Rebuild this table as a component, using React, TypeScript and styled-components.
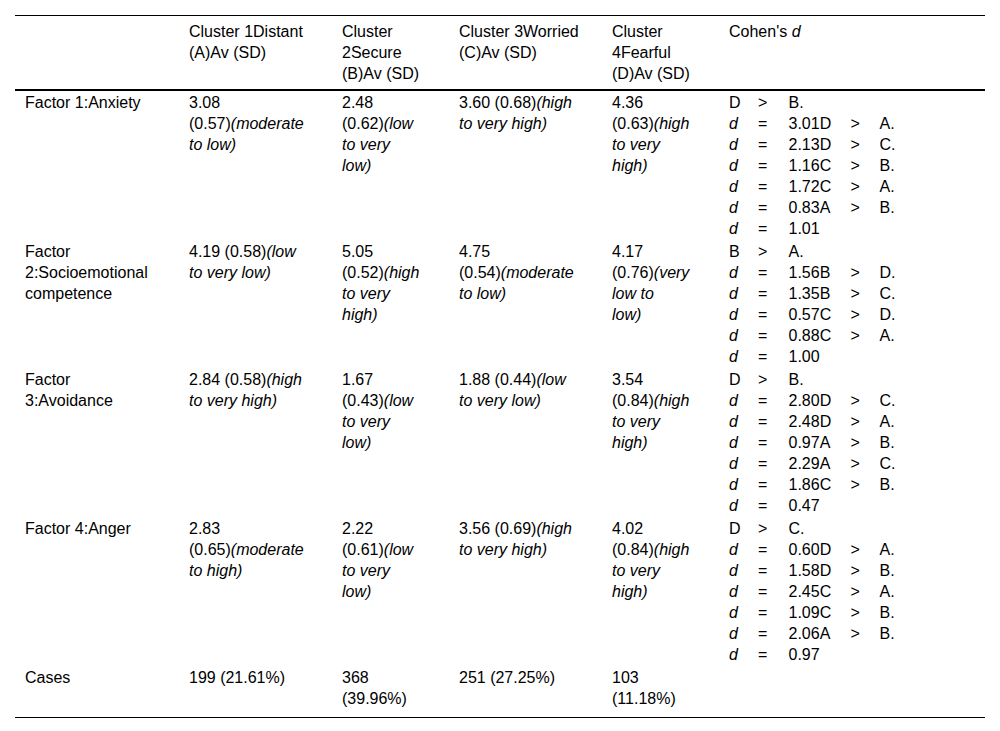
import React from "react";
import styled, { createGlobalStyle } from "styled-components";

const GlobalStyle = createGlobalStyle`
  html, body {
    margin: 0;
    padding: 0;
    background: #fff;
  }
  body {
    font-family: "Liberation Sans", Arial, Helvetica, sans-serif;
    font-size: 16px;
    color: #000;
  }
`;

const Page = styled.div`
  padding: 15px;
`;

const Table = styled.table`
  width: 970px;
  border-collapse: collapse;
  table-layout: fixed;
  border-top: 1px solid #000;
  border-bottom: 1px solid #000;
`;

const HeadCell = styled.th`
  text-align: left;
  font-weight: normal;
  vertical-align: top;
  padding: 5px 0 5px 10px;
  border-bottom: 2px solid #000;
`;

const BodyCell = styled.td<{ $last?: boolean }>`
  vertical-align: top;
  padding: 1px 0 ${(p) => (p.$last ? "8px" : "1px")} 10px;
`;

const Line = styled.span`
  display: block;
  white-space: nowrap;
  line-height: 21px;
`;

const Em = styled.i`
  font-style: italic;
`;

const CohenGrid = styled.div`
  display: grid;
  grid-template-columns: 29px 30.5px 62px 29px auto;
  line-height: 21px;
  white-space: nowrap;
`;

type Seg = string | { i: string };
type CellLines = Seg[][];

const COLS = [164, 153, 117, 153, 117, 266];

const renderLines = (lines: CellLines) =>
  lines.map((segs, k) => (
    <Line key={k}>
      {segs.map((s, j) =>
        typeof s === "string" ? (
          <React.Fragment key={j}>{s}</React.Fragment>
        ) : (
          <Em key={j}>{s.i}</Em>
        )
      )}
    </Line>
  ));

const Cohen = ({ rows }: { rows: string[][] }) => (
  <CohenGrid>
    {rows.map((r, k) =>
      [0, 1, 2, 3, 4].map((c) => {
        const v = r[c] ?? "";
        return (
          <span key={`${k}-${c}`}>
            {v === "d" ? <Em>d</Em> : v}
          </span>
        );
      })
    )}
  </CohenGrid>
);

type Row = { cells: CellLines[]; cohen: string[][] };

const ROWS: Row[] = [
  {
    cells: [
      [["Factor 1:Anxiety"]],
      [["3.08"], ["(0.57)", { i: "(moderate" }], [{ i: "to low)" }]],
      [["2.48"], ["(0.62)", { i: "(low" }], [{ i: "to very" }], [{ i: "low)" }]],
      [["3.60 (0.68)", { i: "(high" }], [{ i: "to very high)" }]],
      [["4.36"], ["(0.63)", { i: "(high" }], [{ i: "to very" }], [{ i: "high)" }]],
    ],
    cohen: [
      ["D", ">", "B."],
      ["d", "=", "3.01D", ">", "A."],
      ["d", "=", "2.13D", ">", "C."],
      ["d", "=", "1.16C", ">", "B."],
      ["d", "=", "1.72C", ">", "A."],
      ["d", "=", "0.83A", ">", "B."],
      ["d", "=", "1.01"],
    ],
  },
  {
    cells: [
      [["Factor"], ["2:Socioemotional"], ["competence"]],
      [["4.19 (0.58)", { i: "(low" }], [{ i: "to very low)" }]],
      [["5.05"], ["(0.52)", { i: "(high" }], [{ i: "to very" }], [{ i: "high)" }]],
      [["4.75"], ["(0.54)", { i: "(moderate" }], [{ i: "to low)" }]],
      [["4.17"], ["(0.76)", { i: "(very" }], [{ i: "low to" }], [{ i: "low)" }]],
    ],
    cohen: [
      ["B", ">", "A."],
      ["d", "=", "1.56B", ">", "D."],
      ["d", "=", "1.35B", ">", "C."],
      ["d", "=", "0.57C", ">", "D."],
      ["d", "=", "0.88C", ">", "A."],
      ["d", "=", "1.00"],
    ],
  },
  {
    cells: [
      [["Factor"], ["3:Avoidance"]],
      [["2.84 (0.58)", { i: "(high" }], [{ i: "to very high)" }]],
      [["1.67"], ["(0.43)", { i: "(low" }], [{ i: "to very" }], [{ i: "low)" }]],
      [["1.88 (0.44)", { i: "(low" }], [{ i: "to very low)" }]],
      [["3.54"], ["(0.84)", { i: "(high" }], [{ i: "to very" }], [{ i: "high)" }]],
    ],
    cohen: [
      ["D", ">", "B."],
      ["d", "=", "2.80D", ">", "C."],
      ["d", "=", "2.48D", ">", "A."],
      ["d", "=", "0.97A", ">", "B."],
      ["d", "=", "2.29A", ">", "C."],
      ["d", "=", "1.86C", ">", "B."],
      ["d", "=", "0.47"],
    ],
  },
  {
    cells: [
      [["Factor 4:Anger"]],
      [["2.83"], ["(0.65)", { i: "(moderate" }], [{ i: "to high)" }]],
      [["2.22"], ["(0.61)", { i: "(low" }], [{ i: "to very" }], [{ i: "low)" }]],
      [["3.56 (0.69)", { i: "(high" }], [{ i: "to very high)" }]],
      [["4.02"], ["(0.84)", { i: "(high" }], [{ i: "to very" }], [{ i: "high)" }]],
    ],
    cohen: [
      ["D", ">", "C."],
      ["d", "=", "0.60D", ">", "A."],
      ["d", "=", "1.58D", ">", "B."],
      ["d", "=", "2.45C", ">", "A."],
      ["d", "=", "1.09C", ">", "B."],
      ["d", "=", "2.06A", ">", "B."],
      ["d", "=", "0.97"],
    ],
  },
];

const HEAD: CellLines[] = [
  [],
  [["Cluster 1Distant"], ["(A)Av (SD)"]],
  [["Cluster"], ["2Secure"], ["(B)Av (SD)"]],
  [["Cluster 3Worried"], ["(C)Av (SD)"]],
  [["Cluster"], ["4Fearful"], ["(D)Av (SD)"]],
  [["Cohen's ", { i: "d" }]],
];

const CASES: CellLines[] = [
  [["Cases"]],
  [["199 (21.61%)"]],
  [["368"], ["(39.96%)"]],
  [["251 (27.25%)"]],
  [["103"], ["(11.18%)"]],
  [],
];

export default function App() {
  return (
    <>
      <GlobalStyle />
      <Page>
        <Table>
          <colgroup>
            {COLS.map((w, k) => (
              <col key={k} style={{ width: w }} />
            ))}
          </colgroup>
          <thead>
            <tr>
              {HEAD.map((c, k) => (
                <HeadCell key={k}>{renderLines(c)}</HeadCell>
              ))}
            </tr>
          </thead>
          <tbody>
            {ROWS.map((r, k) => (
              <tr key={k}>
                {r.cells.map((c, j) => (
                  <BodyCell key={j}>{renderLines(c)}</BodyCell>
                ))}
                <BodyCell>
                  <Cohen rows={r.cohen} />
                </BodyCell>
              </tr>
            ))}
            <tr>
              {CASES.map((c, j) => (
                <BodyCell key={j} $last>
                  {renderLines(c)}
                </BodyCell>
              ))}
            </tr>
          </tbody>
        </Table>
      </Page>
    </>
  );
}
